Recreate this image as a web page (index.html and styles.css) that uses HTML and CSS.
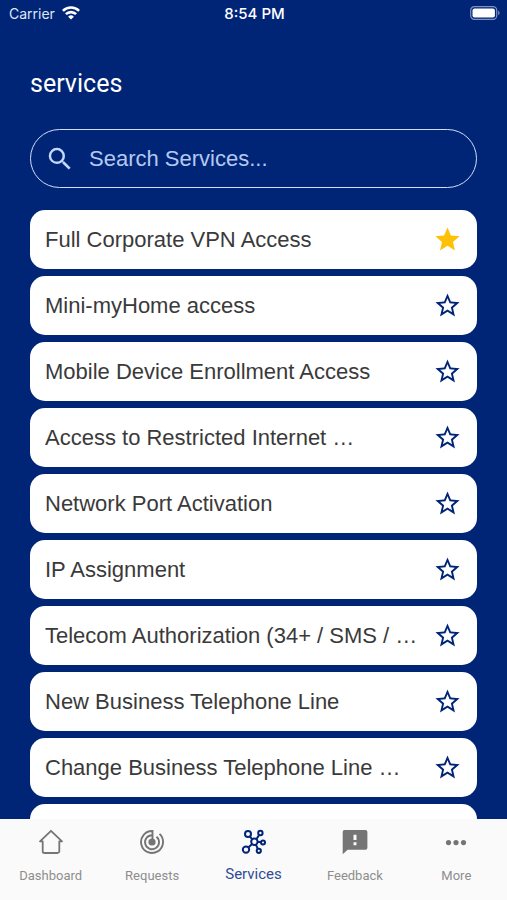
FILE: index.html
```html
<!DOCTYPE html>
<html lang="en">
  <head>
    <meta charset="UTF-8" />
    <meta name="viewport" content="width=device-width, initial-scale=1.0" />
    <title>Services</title>
    <link rel="stylesheet" href="styles.css">
  </head>
  <body>
    <!-- icons used more than once -->
    <svg class="sprite" aria-hidden="true">
      <symbol id="star" viewBox="0 0 24 24">
        <path d="M12 17.27 18.18 21l-1.64-7.03L22 9.24l-7.19-.61L12 2 9.19 8.63 2 9.24l5.46 4.73L5.82 21z" />
      </symbol>
      <symbol id="star-outline" viewBox="0 0 24 24">
        <path d="M22 9.24l-7.19-.62L12 2 9.19 8.63 2 9.24l5.46 4.73L5.82 21 12 17.27 18.18 21l-1.63-7.03L22 9.24zM12 15.4l-3.76 2.27 1-4.28-3.32-2.88 4.38-.38L12 6.1l1.71 4.04 4.38.38-3.32 2.88 1 4.28L12 15.4z" />
      </symbol>
    </svg>

    <div class="status">
      <div class="carrier">
        <span>Carrier</span>
        <svg width="18" height="14" viewBox="0 0 18 14" fill="none" stroke="currentColor" stroke-width="2.6">
          <path d="M.9 4.9a11.5 11.5 0 0 1 16.2 0" />
          <path d="M3.9 8.2a7.2 7.2 0 0 1 10.2 0" />
          <path d="M9 13.6 6.1 10.7a4.1 4.1 0 0 1 5.8 0z" fill="currentColor" stroke="none" />
        </svg>
      </div>
      <div class="time">8:54 PM</div>
      <div class="battery">
        <svg width="30" height="14" viewBox="0 0 30 14">
          <rect x=".7" y=".7" width="26" height="12.6" rx="3.6" fill="none" stroke="#7f92bd" stroke-width="1.2" />
          <rect x="2.5" y="2.5" width="22.4" height="9" rx="2" fill="#fff" />
          <path d="M28.2 4.8c1.8.6 1.8 3.8 0 4.4z" fill="#7f92bd" />
        </svg>
      </div>
    </div>

    <main class="content">
      <h1>services</h1>

      <form class="search" role="search">
        <label for="search" aria-label="Search Services">
          <svg width="30" height="30" viewBox="0 0 24 24" fill="currentColor">
            <path d="M15.5 14h-.79l-.28-.27A6.47 6.47 0 0 0 16 9.5 6.5 6.5 0 1 0 9.5 16c1.61 0 3.09-.59 4.23-1.57l.27.28v.79l5 4.99L20.49 19l-4.99-5zm-6 0C7.01 14 5 11.99 5 9.5S7.01 5 9.5 5 14 7.01 14 9.5 11.99 14 9.5 14z" />
          </svg>
        </label>
        <input type="text" id="search" name="search" placeholder="Search Services..." />
      </form>

      <ul class="services">
        <li class="card">
          <a href="#">Full Corporate VPN Access</a>
          <button type="button" class="fav active" aria-label="Favorite"><svg><use href="#star" /></svg></button>
        </li>
        <li class="card">
          <a href="#">Mini-myHome access</a>
          <button type="button" class="fav" aria-label="Favorite"><svg><use href="#star-outline" /></svg></button>
        </li>
        <li class="card">
          <a href="#">Mobile Device Enrollment Access</a>
          <button type="button" class="fav" aria-label="Favorite"><svg><use href="#star-outline" /></svg></button>
        </li>
        <li class="card">
          <a href="#">Access to Restricted Internet …</a>
          <button type="button" class="fav" aria-label="Favorite"><svg><use href="#star-outline" /></svg></button>
        </li>
        <li class="card">
          <a href="#">Network Port Activation</a>
          <button type="button" class="fav" aria-label="Favorite"><svg><use href="#star-outline" /></svg></button>
        </li>
        <li class="card">
          <a href="#">IP Assignment</a>
          <button type="button" class="fav" aria-label="Favorite"><svg><use href="#star-outline" /></svg></button>
        </li>
        <li class="card">
          <a href="#">Telecom Authorization (34+ / SMS / …</a>
          <button type="button" class="fav" aria-label="Favorite"><svg><use href="#star-outline" /></svg></button>
        </li>
        <li class="card">
          <a href="#">New Business Telephone Line</a>
          <button type="button" class="fav" aria-label="Favorite"><svg><use href="#star-outline" /></svg></button>
        </li>
        <li class="card">
          <a href="#">Change Business Telephone Line …</a>
          <button type="button" class="fav" aria-label="Favorite"><svg><use href="#star-outline" /></svg></button>
        </li>
        <li class="card"></li>
      </ul>
    </main>

    <nav class="tabs">
      <a href="#" class="tab">
        <svg viewBox="0 0 26 26" fill="none" stroke="currentColor" stroke-width="1.8" stroke-linejoin="round" stroke-linecap="round">
          <path d="M2 12.3 13 1.8l11 10.5h-2.7v9.9a1.8 1.8 0 0 1-1.8 1.8h-13a1.8 1.8 0 0 1-1.8-1.8v-9.9z" />
        </svg>
        <span>Dashboard</span>
      </a>
      <a href="#" class="tab">
        <svg viewBox="0 0 26 26" fill="none" stroke="currentColor" stroke-width="1.9">
          <path d="M13.500 13V2A11 11 0 1 0 20.500 4.900" />
          <path d="M13 6.200a7 7 0 1 0 4.500 1.600" />
          <circle cx="13" cy="13" r="3.600" fill="currentColor" stroke="none" />
        </svg>
        <span>Requests</span>
      </a>
      <a href="#" class="tab active">
        <svg viewBox="0 0 26 26" fill="none" stroke="currentColor" stroke-width="2">
          <circle cx="13.400" cy="12.800" r="3.200" />
          <circle cx="7" cy="5" r="3" />
          <circle cx="19.400" cy="4" r="2.200" />
          <circle cx="22" cy="13.600" r="2" />
          <circle cx="17.800" cy="21.800" r="2.100" />
          <circle cx="5" cy="20.600" r="3.200" />
          <path d="M8.800 7.400 11.300 10.400M18.200 5.900 15.300 10.200M16.500 13.100h3.500M14.900 15.600l1.900 4.200M11.100 14.900l-3.800 3.500" />
        </svg>
        <span>Services</span>
      </a>
      <a href="#" class="tab">
        <svg viewBox="0 0 26 26" fill="currentColor">
          <path fill-rule="evenodd" d="M3 1h20.400a2 2 0 0 1 2 2v15.800a2 2 0 0 1-2 2H5.600L.700 25.200V3a2 2 0 0 1 2.300-2zM11.500 5.800v5.200h3V5.800zM11.500 13.200v3h3v-3z" />
        </svg>
        <span>Feedback</span>
      </a>
      <a href="#" class="tab">
        <svg viewBox="0 0 26 26" fill="currentColor">
          <circle cx="5.500" cy="13.600" r="2.600" />
          <circle cx="13" cy="13.600" r="2.600" />
          <circle cx="20.500" cy="13.600" r="2.600" />
        </svg>
        <span>More</span>
      </a>
    </nav>
  </body>
</html>
```
FILE: styles.css
```css
* {
  box-sizing: border-box;
}

body {
  margin: 0;
  height: 100vh;
  display: flex;
  flex-direction: column;
  overflow: hidden;
  background-color: #002577;
  color: #fff;
  font-family: "Liberation Sans", Arial, sans-serif;
}

.sprite {
  display: none;
}

/* Status bar */
.status {
  display: grid;
  grid-template-columns: 1fr auto 1fr;
  align-items: center;
  height: 26px;
  padding: 0 7px 0 9px;
  font-family: Inter, sans-serif;
  font-size: 14px;
}

.carrier {
  display: flex;
  align-items: center;
  gap: 7px;
  color: #dfe6f5;
}

.carrier svg {
  color: #fff;
}

.time {
  font-size: 15px;
  font-weight: 500;
}

.battery {
  display: flex;
  justify-content: flex-end;
}

/* Page content */
.content {
  flex: 1;
  min-height: 0;
  padding: 42px 30px 0;
  overflow: hidden;
}

h1 {
  margin: 0 0 29px;
  font-family: Roboto, sans-serif;
  font-size: 25px;
  font-weight: 400;
  line-height: 32px;
}

.search {
  display: flex;
  align-items: center;
  height: 59px;
  padding: 0 14px;
  border: 1px solid #d0defa;
  border-radius: 30px;
  color: #c3d7ff;
}

.search label {
  display: flex;
}

.search input {
  flex: 1;
  min-width: 0;
  margin-left: 14px;
  padding: 0;
  border: none;
  outline: none;
  background: none;
  color: inherit;
  font-family: inherit;
  font-size: 22px;
}

.search input::placeholder {
  color: #b5c8f2;
  opacity: 1;
}

.services {
  display: flex;
  flex-direction: column;
  gap: 7px;
  margin: 22px 0 0;
  padding: 0;
  list-style: none;
}

.card {
  display: flex;
  align-items: center;
  height: 59px;
  padding: 0 15px;
  border-radius: 15px;
  background-color: #fff;
}

.card a {
  flex: 1;
  min-width: 0;
  overflow: hidden;
  white-space: nowrap;
  color: #3a3a3a;
  font-size: 22px;
  line-height: 28px;
  text-decoration: none;
}

.fav {
  display: flex;
  padding: 0;
  border: none;
  background: none;
  color: #002577;
  cursor: pointer;
}

.fav svg {
  width: 29px;
  height: 29px;
  fill: currentColor;
}

.fav.active {
  color: #ffc107;
}

/* Bottom tabs */
.tabs {
  display: flex;
  height: 81px;
  padding-top: 10px;
  background-color: #fafafa;
}

.tab {
  flex: 1;
  display: flex;
  flex-direction: column;
  align-items: center;
  gap: 11px;
  color: #757575;
  font-family: Roboto, sans-serif;
  font-size: 13px;
  line-height: 20px;
  text-decoration: none;
}

.tab svg {
  width: 26px;
  height: 26px;
}

.tab span {
  color: #8e8e8e;
}

.tab.active {
  gap: 9px;
  color: #002577;
  font-size: 15px;
}

.tab.active span {
  color: #2f4c94;
}
```
